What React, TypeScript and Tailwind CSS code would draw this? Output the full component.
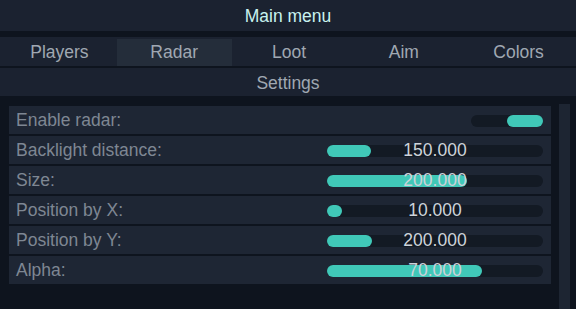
const tabs = ['Players', 'Radar', 'Loot', 'Aim', 'Colors']

type Row = { label: string; fill?: number; value?: string; toggle?: boolean }

const rows: Row[] = [
  { label: 'Enable radar:', toggle: true },
  { label: 'Backlight distance:', fill: 44, value: '150.000' },
  { label: 'Size:', fill: 140, value: '200.000' },
  { label: 'Position by X:', fill: 15, value: '10.000' },
  { label: 'Position by Y:', fill: 45, value: '200.000' },
  { label: 'Alpha:', fill: 155, value: '70.000' },
]

function Slider({ fill, value }: { fill: number; value: string }) {
  return (
    <div className="relative w-[216px] h-[12px] rounded-full bg-[#131a24]">
      <div className="h-full rounded-full bg-[#40c8b8]" style={{ width: fill }} />
      <span className="absolute inset-0 flex items-center justify-center text-[17.5px] text-[#cdd3da]">
        {value}
      </span>
    </div>
  )
}

export default function App() {
  return (
    <div className="w-[576px] h-[309px] bg-[#0e141e] flex flex-col overflow-hidden font-['Liberation_Sans',sans-serif]">
      <div className="h-[31px] pt-[2px] bg-[#1b2230] flex items-center justify-center text-[17.5px] text-[#c8f2ef]">
        Main menu
      </div>
      <div className="h-[29px] mt-[6px] pt-[2px] pl-[2px] bg-[#1b2230] grid grid-cols-5">
        {tabs.map((t) => (
          <div
            key={t}
            className={`flex items-center justify-center text-[17.5px] text-[#a0a8b2] ${
              t === 'Radar' ? 'bg-[#242d3a]' : ''
            }`}
          >
            {t}
          </div>
        ))}
      </div>
      <div className="h-[28px] mt-[2px] pt-[3px] bg-[#1b2230] flex items-center justify-center text-[17.5px] text-[#a0a8b2]">
        Settings
      </div>
      <div className="flex flex-1 mt-[8px] pl-[9px] pr-[6px] gap-[8px]">
        <div className="flex-1 flex flex-col gap-[2px] pt-[2px]">
          {rows.map((r) => (
            <div
              key={r.label}
              className="h-[28px] bg-[#1e2634] flex items-center pl-[7px] pr-[8px] pt-[1px]"
            >
              <span className="flex-1 text-[17.5px] text-[#7e8793]">{r.label}</span>
              {r.toggle ? (
                <div className="w-[72px] h-[12px] rounded-full bg-[#131a24] flex justify-end">
                  <div className="w-[36px] h-full rounded-full bg-[#40c8b8]" />
                </div>
              ) : (
                <Slider fill={r.fill!} value={r.value!} />
              )}
            </div>
          ))}
        </div>
        <div className="w-[11px] bg-[#1d2532]" />
      </div>
    </div>
  )
}
